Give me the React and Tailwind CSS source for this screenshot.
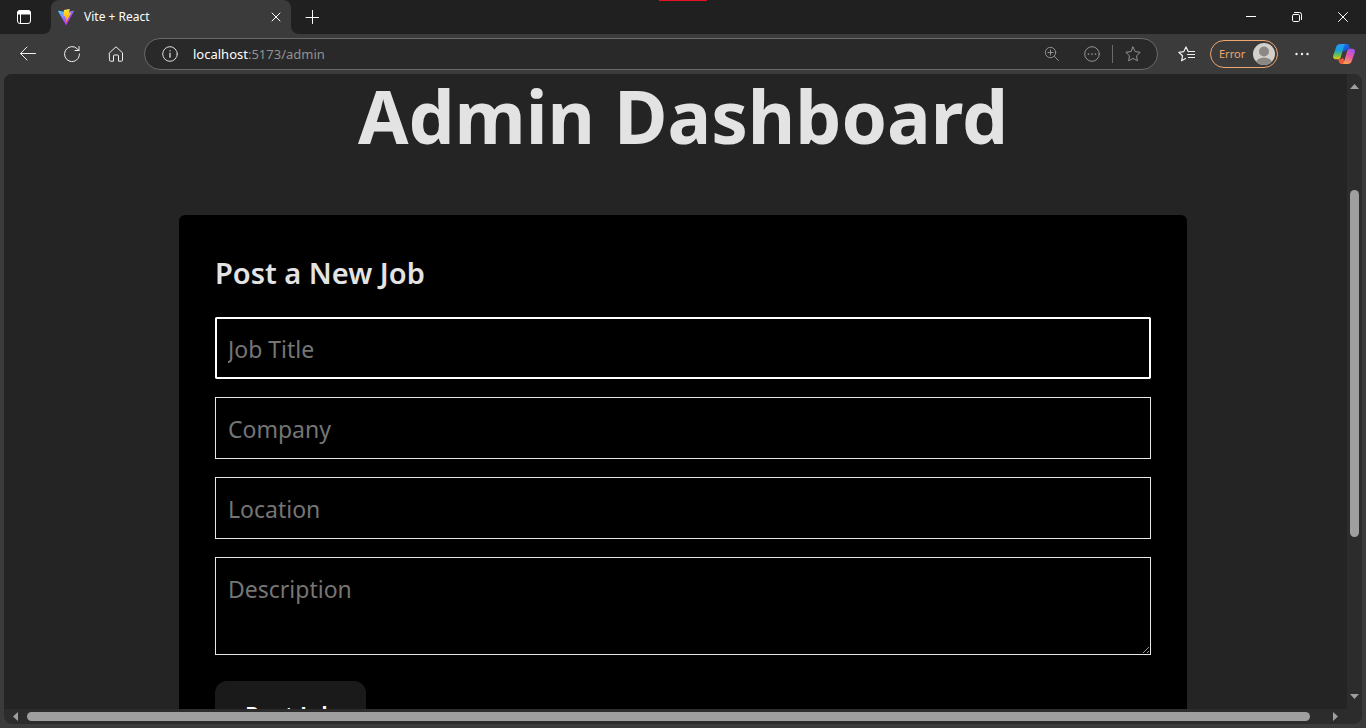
import React from 'react';

const iconProps = { fill: 'none', stroke: 'currentColor', strokeLinecap: 'round', strokeLinejoin: 'round' };

function TabActionsIcon() {
  return (
    <svg width="16" height="16" viewBox="0 0 16 16" {...iconProps}>
      <rect x="1.5" y="1.5" width="13" height="13" rx="2.5" />
      <path d="M1.5 4V4A2.5 2.5 0 0 1 4 1.5h8A2.5 2.5 0 0 1 14.5 4v1h-13z" fill="currentColor" />
      <path d="M4.5 5v9.5" />
    </svg>
  );
}

function ViteLogo() {
  return (
    <svg width="16" height="16" viewBox="0 0 256 257">
      <defs>
        <linearGradient id="viteShield" x1="-.828%" x2="57.636%" y1="7.652%" y2="78.411%">
          <stop offset="0%" stopColor="#41D1FF" />
          <stop offset="100%" stopColor="#BD34FE" />
        </linearGradient>
        <linearGradient id="viteBolt" x1="43.376%" x2="50.316%" y1="2.242%" y2="89.03%">
          <stop offset="0%" stopColor="#FFEA83" />
          <stop offset="8.333%" stopColor="#FFDD35" />
          <stop offset="100%" stopColor="#FFA800" />
        </linearGradient>
      </defs>
      <path fill="url(#viteShield)" d="M255.153 37.938L134.897 252.976c-2.483 4.44-8.862 4.466-11.382.048L.875 37.958c-2.746-4.814 1.371-10.646 6.827-9.67l120.385 21.517a6.537 6.537 0 0 0 2.322-.004l117.867-21.483c5.438-.991 9.574 4.796 6.877 9.62Z" />
      <path fill="url(#viteBolt)" d="M185.432.063L96.44 17.501a3.268 3.268 0 0 0-2.634 3.014l-5.474 92.456a3.268 3.268 0 0 0 3.997 3.378l24.777-5.718c2.318-.535 4.413 1.507 3.936 3.838l-7.361 36.047c-.495 2.426 1.782 4.5 4.151 3.78l15.304-4.649c2.372-.72 4.652 1.36 4.15 3.788l-11.698 56.621c-.732 3.542 3.979 5.473 5.943 2.437l1.313-2.028l72.516-144.72c1.215-2.423-.88-5.186-3.54-4.672l-25.505 4.922c-2.396.462-4.435-1.77-3.759-4.114l16.646-57.705c.677-2.35-1.37-4.583-3.769-4.113Z" />
    </svg>
  );
}

function CopilotLogo() {
  return (
    <svg width="24" height="24" viewBox="0 0 24 24">
      <defs>
        <linearGradient id="copLeft" x1="0" y1="0" x2="0" y2="1">
          <stop offset="0" stopColor="#2a9bf5" />
          <stop offset=".4" stopColor="#14a0dc" />
          <stop offset=".7" stopColor="#5fbf5a" />
          <stop offset="1" stopColor="#f0c415" />
        </linearGradient>
        <linearGradient id="copTop" x1="0" y1="0" x2="1" y2="1">
          <stop offset="0" stopColor="#1b7df0" />
          <stop offset="1" stopColor="#1846c8" />
        </linearGradient>
        <linearGradient id="copRight" x1=".7" y1="0" x2=".3" y2="1">
          <stop offset="0" stopColor="#a052f2" />
          <stop offset=".5" stopColor="#e85aa2" />
          <stop offset="1" stopColor="#ffa04a" />
        </linearGradient>
      </defs>
      <path fill="url(#copTop)" d="M9 2h5.700c1.300 0 2.200.8 2.600 2l1 3.500h-3c-1.400 0-2.300.7-2.700 2L10 9z" />
      <path fill="url(#copLeft)" d="M8.200 2H14c-1.100.3-1.700 1-2.100 2.300L8.900 15c-.4 1.500-1.400 2.300-2.900 2.300H3.800c-2.200 0-3.200-1.700-2.600-3.700L4.300 4.800C4.900 3 6.200 2 8.200 2z" />
      <path fill="#ef5a3c" d="M5.900 17.300h2.500c1.300 0 2-.7 2.400-2l2 4.700c-.5 1-1.200 2-2.400 2H9.500c-1.300 0-2-.8-2.400-2z" />
      <path fill="url(#copRight)" d="M15.800 22H10c1.100-.3 1.700-1 2.100-2.300L15.100 9c.4-1.500 1.400-2.300 2.900-2.300h2.200c2.200 0 3.200 1.700 2.600 3.700l-3.100 8.800c-.6 1.800-1.900 2.800-3.900 2.800z" />
    </svg>
  );
}

const starPath = 'M8 1l2.200 4.600 5 .7-3.700 3.500.9 5L8 12.400l-4.400 2.400.9-5L.8 6.300l5-.7z';

function TabBar() {
  return (
    <header className="relative flex h-[34px] shrink-0 bg-[#3b3b3b] text-white">
      <span className="absolute inset-x-0 top-0 mx-auto h-px w-12 bg-[#e81123]" />
      <button aria-label="Tab actions" className="flex w-[51px] items-center justify-center rounded-br-lg bg-[#202020] pr-1">
        <TabActionsIcon />
      </button>
      <div className="flex bg-[#202020]">
        <div className="flex w-60 items-center gap-[10px] rounded-t-lg bg-[#3b3b3b] px-[7px]">
          <ViteLogo />
          <span className="flex-1 text-xs">Vite + React</span>
          <button aria-label="Close tab" className="flex size-4 items-center justify-center">
            <svg width="10" height="10" viewBox="0 0 10 10" {...iconProps}>
              <path d="M1 1l8 8M9 1l-8 8" />
            </svg>
          </button>
        </div>
      </div>
      <div className="flex flex-1 justify-between rounded-bl-lg bg-[#202020]">
        <button aria-label="New tab" className="flex w-[42px] items-center justify-center">
          <svg width="14" height="14" viewBox="0 0 14 14" {...iconProps}>
            <path d="M7.500.5v13M1 7.500h13" />
          </svg>
        </button>
        <div className="flex">
          <button aria-label="Minimize" className="flex w-[46px] items-center justify-center">
            <svg width="10" height="10" viewBox="0 0 10 10" {...iconProps}>
              <path d="M0 4.500h10" />
            </svg>
          </button>
          <button aria-label="Restore" className="flex w-[46px] items-center justify-center">
            <svg width="10" height="10" viewBox="0 0 10 10" {...iconProps}>
              <rect x=".5" y="2.500" width="7" height="7" rx="1.200" />
              <path d="M2.500.5h5a2 2 0 0 1 2 2v5" />
            </svg>
          </button>
          <button aria-label="Close window" className="flex w-[46px] items-center justify-center">
            <svg width="10" height="10" viewBox="0 0 10 10" {...iconProps}>
              <path d="M.5.5l9 9M9.500.5l-9 9" />
            </svg>
          </button>
        </div>
      </div>
    </header>
  );
}

function Toolbar() {
  return (
    <nav aria-label="Browser toolbar" className="flex h-10 shrink-0 items-center bg-[#3b3b3b] pr-[14px] pl-5 text-[#f0f0f0]">
      <div className="flex gap-7">
        <button aria-label="Back">
          <svg width="16" height="16" viewBox="0 0 16 16" {...iconProps}>
            <path d="M15.500 7.500H.8M7 1L.5 7.500 7 14" />
          </svg>
        </button>
        <button aria-label="Refresh">
          <svg width="16" height="16" viewBox="0 0 16 16" {...iconProps}>
            <path d="M15.500 8A7.500 7.500 0 1 1 13.500 3L15 4.500M15 .5v4h-4" />
          </svg>
        </button>
        <button aria-label="Home">
          <svg width="16" height="16" viewBox="0 0 16 16" {...iconProps}>
            <path d="M1.500 6.800L8 .8l6.500 6v7.400a1 1 0 0 1-1 1h-3V10a1 1 0 0 0-1-1h-3a1 1 0 0 0-1 1v5.200h-3a1 1 0 0 1-1-1z" />
          </svg>
        </button>
      </div>
      <div className="ml-5 flex h-8 flex-1 items-center rounded-full border border-[#6a6a6a] bg-[#292929] pr-2 pl-[17px] text-[#929292]">
        <svg width="16" height="16" viewBox="0 0 16 16" className="text-[#dddddd]" {...iconProps}>
          <circle cx="8" cy="8" r="7.300" />
          <path d="M8 7.200v4M8 4.600v.2" strokeWidth="1.300" />
        </svg>
        <p className="ml-[15px] flex-1 pt-0.5 text-[13px]">
          <span className="text-white">localhost</span>:5173/admin
        </p>
        <button aria-label="Zoom">
          <svg width="16" height="16" viewBox="0 0 16 16" {...iconProps}>
            <circle cx="6.500" cy="6.500" r="5.200" />
            <path d="M10.500 10.500l4 4M4 6.500h5M6.500 4v5" />
          </svg>
        </button>
        <button aria-label="Page actions" className="ml-6">
          <svg width="16" height="16" viewBox="0 0 16 16" {...iconProps}>
            <circle cx="8" cy="8" r="7.300" />
            <path d="M4.500 8h.01M8 8h.01M11.500 8h.01" strokeWidth="1.700" />
          </svg>
        </button>
        <span className="mx-3 h-[18px] w-px bg-[#6a6a6a]" />
        <button aria-label="Add to favorites" className="mr-2">
          <svg width="16" height="16" viewBox="0 0 16 16" {...iconProps}>
            <path d={starPath} />
          </svg>
        </button>
      </div>
      <button aria-label="Favorites" className="ml-5">
        <svg width="17" height="16" viewBox="0 0 17 16" {...iconProps}>
          <path strokeWidth="1.200" d="M10.200 5.600L8 1 5.800 5.600.8 6.300l3.700 3.500-.9 5L7.500 12.600M10.500 5.500h6M9.500 8.500h7M10.500 11.500h6" />
        </svg>
      </button>
      <button className="ml-[15px] flex h-7 w-[68px] items-center justify-between rounded-full border border-[#f0a66e] pr-0.5 pl-2 text-[11px] text-[#f0a66e]">
        Error
        <svg width="22" height="22" viewBox="0 0 22 22" aria-hidden="true">
          <defs>
            <clipPath id="avatar"><circle cx="11" cy="11" r="11" /></clipPath>
          </defs>
          <g clipPath="url(#avatar)">
            <rect width="22" height="22" fill="#d4d1cd" />
            <circle cx="11" cy="8.500" r="5" fill="#8c8985" />
            <ellipse cx="11" cy="20" rx="8" ry="5.500" fill="#8c8985" />
          </g>
        </svg>
      </button>
      <button aria-label="Settings and more" className="ml-4">
        <svg width="16" height="16" viewBox="0 0 16 16" fill="currentColor">
          <circle cx="2.500" cy="8" r="1.200" />
          <circle cx="8" cy="8" r="1.200" />
          <circle cx="13.500" cy="8" r="1.200" />
        </svg>
      </button>
      <button aria-label="Copilot" className="-mr-1 ml-[22px]">
        <CopilotLogo />
      </button>
    </nav>
  );
}

const fieldClass =
  'block w-full border border-[#e5e7eb] bg-black px-3 pt-[13px] pb-[11px] text-[23px] leading-9 text-white placeholder:text-[#757575]';

function AdminPage() {
  return (
    <div className="w-[calc(100vw-8px)] px-12">
      <h1 className="text-center text-[73px] leading-[84px] font-bold text-[#e3e3e3]">Admin Dashboard</h1>
      <form className="mx-auto mt-[57px] max-w-[1008px] rounded-md bg-black p-9" onSubmit={(e) => e.preventDefault()}>
        <h2 className="mb-[22px] text-[29px] leading-[44px] font-semibold text-[#e3e3e3]">Post a New Job</h2>
        <div className="flex flex-col gap-[18px]">
          <input aria-label="Job Title" placeholder="Job Title" className={fieldClass + ' rounded-xs outline-2 -outline-offset-2 outline-white'} />
          <input aria-label="Company" placeholder="Company" className={fieldClass} />
          <input aria-label="Location" placeholder="Location" className={fieldClass} />
          <textarea aria-label="Description" placeholder="Description" rows={2} className={fieldClass} />
        </div>
        <button type="submit" className="mt-[26px] rounded-xl bg-[#1a1a1a] px-[30px] py-4 text-[23px] leading-9 font-semibold text-white">
          Post Job
        </button>
      </form>
    </div>
  );
}

function Arrow({ points }) {
  return (
    <svg width="9" height="9" viewBox="0 0 9 9" className="shrink-0" fill="#9f9f9f" aria-hidden="true">
      <polygon points={points} />
    </svg>
  );
}

export default function App() {
  return (
    <div className="flex h-screen flex-col overflow-hidden bg-[#3b3b3b] font-['Noto_Sans','Open_Sans',sans-serif]">
      <TabBar />
      <Toolbar />
      <main className="mx-1 mb-1 grid min-h-0 flex-1 grid-cols-[minmax(0,1fr)_15px] grid-rows-[minmax(0,1fr)_15px] overflow-hidden rounded-lg bg-[#2c2c2c]">
        <div className="overflow-hidden bg-[#242424]">
          <AdminPage />
        </div>
        <div className="flex flex-col items-center py-2">
          <Arrow points="4.500,2 9,7 0,7" />
          <span className="flex-[99]" />
          <span className="w-[9px] flex-[346] rounded-full bg-[#9f9f9f]" />
          <span className="flex-[155]" />
          <Arrow points="0,2 9,2 4.500,7" />
        </div>
        <div className="flex items-center px-[7px]">
          <Arrow points="2,4.500 7,0 7,9" />
          <span className="w-[7px]" />
          <span className="h-[9px] flex-1 rounded-full bg-[#9f9f9f]" />
          <span className="w-[21px]" />
          <Arrow points="2,0 7,4.500 2,9" />
        </div>
      </main>
    </div>
  );
}
